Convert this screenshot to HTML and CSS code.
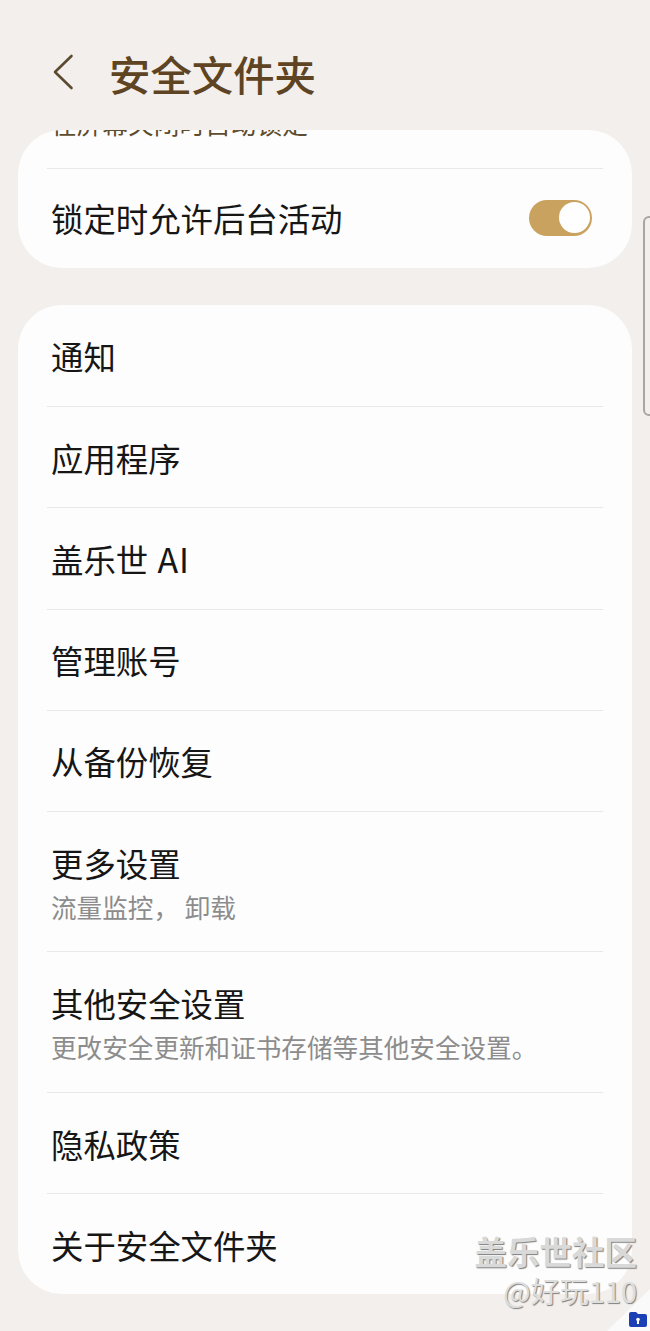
FILE: index.html
```html
<!DOCTYPE html>
<html lang="zh-CN">
<head>
<meta charset="utf-8">
<title>安全文件夹</title>
<link rel="stylesheet" href="styles.css">
</head>
<body>
<div class="screen">
  <header class="appbar">
    <svg class="back" width="24" height="40" viewBox="0 0 24 40" aria-hidden="true"><path d="M20.500 4 L4 20 L20.500 36" fill="none" stroke="#5c4a30" stroke-width="2.600" stroke-linecap="round" stroke-linejoin="round"/></svg>
    <h1 class="title">安全文件夹</h1>
  </header>
  <main class="content">
    <section class="card card-clipped">
      <div class="scrolled">
        <div class="row row-cut"><span class="cut-text">在屏幕关闭时自动锁定</span></div>
        <div class="row row-switch">
          <span class="label">锁定时允许后台活动</span>
          <span class="switch"><span class="knob"></span></span>
        </div>
      </div>
    </section>
    <section class="card">
      <div class="row"><span class="label">通知</span></div>
      <div class="row"><span class="label">应用程序</span></div>
      <div class="row"><span class="label label-mixed">盖乐世 <span class="latin">AI</span></span></div>
      <div class="row"><span class="label">管理账号</span></div>
      <div class="row"><span class="label">从备份恢复</span></div>
      <div class="row row-two"><span class="label">更多设置</span><span class="sub">流量监控， 卸载</span></div>
      <div class="row row-two"><span class="label">其他安全设置</span><span class="sub">更改安全更新和证书存储等其他安全设置。</span></div>
      <div class="row"><span class="label">隐私政策</span></div>
      <div class="row"><span class="label">关于安全文件夹</span></div>
    </section>
  </main>
  <div class="edge-handle"></div>
  <div class="corner"></div>
  <div class="watermark">
    <div class="wm-name">盖乐世社区</div>
    <div class="wm-user">@好玩110</div>
  </div>
  <svg class="folder" width="18" height="15" viewBox="0 0 18 15" aria-hidden="true"><path d="M2 0 H7 L9 2 H16 Q18 2 18 4 V13 Q18 15 16 15 H2 Q0 15 0 13 V2 Q0 0 2 0 Z" fill="#1b3fb5"/><rect x="8" y="8" width="2" height="4" fill="#fff"/><circle cx="9" cy="7.500" r="1.800" fill="#fff"/></svg>
</div>
</body>
</html>
```
FILE: styles.css
```css
* { box-sizing: border-box; }
html, body { margin: 0; padding: 0; }
body {
  background: #f2efec;
  font-family: "Noto Sans CJK SC", "Noto Sans", sans-serif;
  color: #1a1a1a;
}
.screen {
  position: relative;
  width: 650px;
  height: 1331px;
  overflow: hidden;
  background: #f2efec;
}
.appbar {
  height: 130px;
  display: flex;
  align-items: center;
  padding: 16px 0 0 51px;
}
.back { flex: none; margin-top: -2px; }
.title {
  margin: 0 0 0 34px;
  font-size: 41.400px;
  line-height: 50px;
  font-weight: 500;
  color: #5e4422;
  white-space: nowrap;
}
.content {
  display: flex;
  flex-direction: column;
  gap: 37px;
  padding: 0 18px;
}
.card {
  background: #fdfdfd;
  border-radius: 44px;
  padding: 0 29px;
  overflow: hidden;
}
.card-clipped { height: 138px; }
.scrolled { margin-top: -62px; }
.row {
  height: 101.200px;
  display: flex;
  flex-direction: column;
  justify-content: center;
  padding: 1px 4px 0;
  border-top: 1.500px solid #e9e8e6;
}
.card > .row:first-child { border-top: none; }
.row-cut {
  height: 100px;
  border-top: none;
  justify-content: flex-end;
  padding-bottom: 27px;
}
.cut-text {
  font-size: 25.700px;
  line-height: 36px;
  color: #5e4d2e;
  white-space: nowrap;
}
.row-switch {
  flex-direction: row;
  align-items: center;
  justify-content: space-between;
  height: 100px;
  padding: 0 11px 2px 4px;
}
.switch {
  position: relative;
  display: block;
  width: 63px;
  height: 36px;
  border-radius: 18px;
  background: #c9a25f;
}
.knob {
  position: absolute;
  right: 2px;
  top: 2.500px;
  width: 31px;
  height: 31px;
  border-radius: 50%;
  background: #fefefe;
}
.label {
  font-size: 32.400px;
  line-height: 44px;
  color: #161616;
  white-space: nowrap;
}
.label-mixed { word-spacing: 2px; }
.latin { font-size: 34px; letter-spacing: 1px; }
.row-two { height: 140.500px; padding-top: 2px; }
.sub {
  font-size: 25.600px;
  line-height: 36px;
  margin-top: 4px;
  color: #8c8c8c;
  white-space: nowrap;
}
.edge-handle {
  position: absolute;
  left: 643px;
  top: 216px;
  width: 14px;
  height: 200px;
  border: 2px solid #a8a6a4;
  border-radius: 6px;
}
.corner {
  position: absolute;
  right: 0;
  bottom: 0;
  width: 43px;
  height: 42px;
  background: #fafafa;
  clip-path: polygon(100% 0, 100% 100%, 0 100%);
}
.watermark {
  position: absolute;
  right: 13px;
  top: 1232px;
  text-align: right;
  white-space: nowrap;
}
.wm-name {
  font-size: 32.500px;
  line-height: 38px;
  font-weight: 700;
  color: #d9d9d9;
  text-shadow: 1px 1px 1px #7d7d7d;
}
.wm-user {
  font-size: 29px;
  line-height: 38px;
  margin-top: 1px;
  color: #dedede;
  text-shadow: 1px 1px 1px #808080;
}
.folder {
  position: absolute;
  left: 629px;
  top: 1312px;
}
```
